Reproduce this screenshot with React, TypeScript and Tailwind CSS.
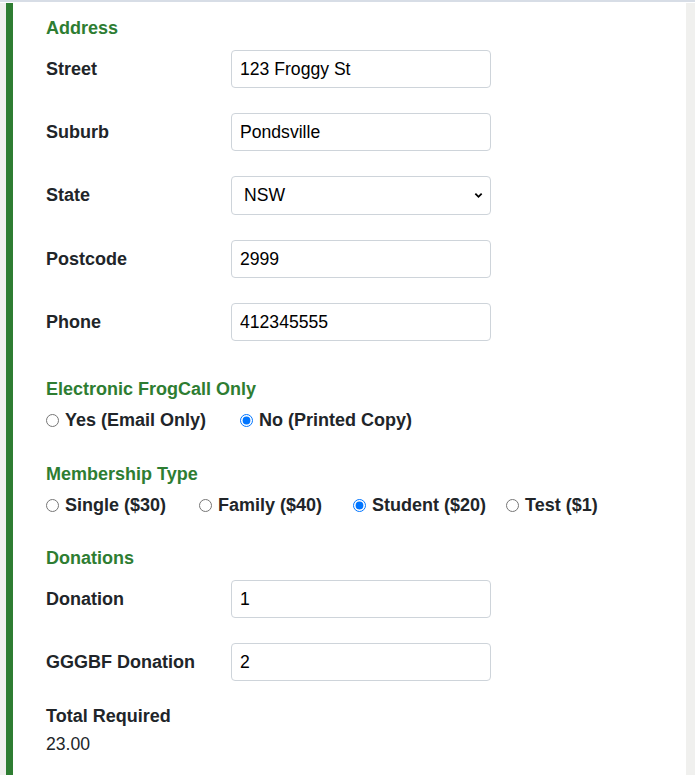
import React from 'react'

const addressRows = [
  { label: 'Street', value: '123 Froggy St' },
  { label: 'Suburb', value: 'Pondsville' },
  { label: 'State', value: 'NSW', select: true },
  { label: 'Postcode', value: '2999' },
  { label: 'Phone', value: '412345555' },
]

const memberships = [
  { label: 'Single ($30)', checked: false },
  { label: 'Family ($40)', checked: false },
  { label: 'Student ($20)', checked: true },
  { label: 'Test ($1)', checked: false },
]

function Heading({ children }: { children: React.ReactNode }) {
  return <h3 className="text-[18px] font-bold leading-[24px] text-[#2e7d32]">{children}</h3>
}

function Field({ label, value, select }: { label: string; value: string; select?: boolean }) {
  return (
    <div className="flex items-center">
      <label className="w-[185px] shrink-0 text-[18px] font-bold text-[#212529]">{label}</label>
      {select ? (
        <div className="relative w-[260px]">
          <select
            defaultValue={value}
            className="h-[39px] w-full appearance-none rounded-[4px] border border-[#ced4da] bg-white pl-[12px] text-[17.6px] text-black outline-none"
          >
            <option>NSW</option>
            <option>VIC</option>
            <option>QLD</option>
          </select>
          {/* chevron */}
          <svg className="pointer-events-none absolute right-[8px] top-[15px] h-[9px] w-[9px]" viewBox="0 0 10 10">
            <path d="M1.5 3l3.5 3.5L8.5 3" fill="none" stroke="#000" strokeWidth={2} />
          </svg>
        </div>
      ) : (
        <input
          defaultValue={value}
          className="h-[38px] w-[260px] rounded-[4px] border border-[#ced4da] bg-white px-[8px] text-[17.6px] text-black outline-none"
        />
      )}
    </div>
  )
}

function Radio({ label, checked, name }: { label: string; checked: boolean; name: string }) {
  return (
    <label className="flex items-center gap-[6px] text-[18px] font-bold text-[#212529]">
      <input type="radio" name={name} defaultChecked={checked} className="m-0 h-[13px] w-[13px]" />
      {label}
    </label>
  )
}

export default function App() {
  return (
    <div className="min-h-[775px] bg-[#f0f0ee] font-['Liberation_Sans',Arial,sans-serif]">
      <div className="h-[3px] border-t-2 border-[#d7dde6] bg-white" />
      <div className="ml-[6px] mr-[9px] min-h-[772px] border-l-[7px] border-[#2e7d32] bg-white pl-[33px] pt-[13px]">
        {/* Address */}
        <Heading>Address</Heading>
        <div className="mt-[10px] flex flex-col gap-[25px]">
          {addressRows.map((row) => (
            <Field key={row.label} {...row} />
          ))}
        </div>

        {/* FrogCall */}
        <div className="mt-[36px]">
          <Heading>Electronic FrogCall Only</Heading>
        </div>
        <div className="mt-[7px] grid grid-cols-[194px_194px] leading-[24px]">
          <Radio name="frogcall" label="Yes (Email Only)" checked={false} />
          <Radio name="frogcall" label="No (Printed Copy)" checked={true} />
        </div>

        {/* Membership */}
        <div className="mt-[30px]">
          <Heading>Membership Type</Heading>
        </div>
        <div className="mt-[7px] grid grid-cols-[153px_154px_153px_153px] leading-[24px]">
          {memberships.map((m) => (
            <Radio key={m.label} name="membership" label={m.label} checked={m.checked} />
          ))}
        </div>

        {/* Donations */}
        <div className="mt-[29px]">
          <Heading>Donations</Heading>
        </div>
        <div className="mt-[10px] flex flex-col gap-[25px]">
          <Field label="Donation" value="1" />
          <Field label="GGGBF Donation" value="2" />
        </div>

        <div className="mt-[23px] text-[18px] font-bold leading-[24px] text-[#212529]">Total Required</div>
        <div className="mt-[4px] text-[17.6px] leading-[24px] text-[#212529]">23.00</div>
      </div>
    </div>
  )
}
